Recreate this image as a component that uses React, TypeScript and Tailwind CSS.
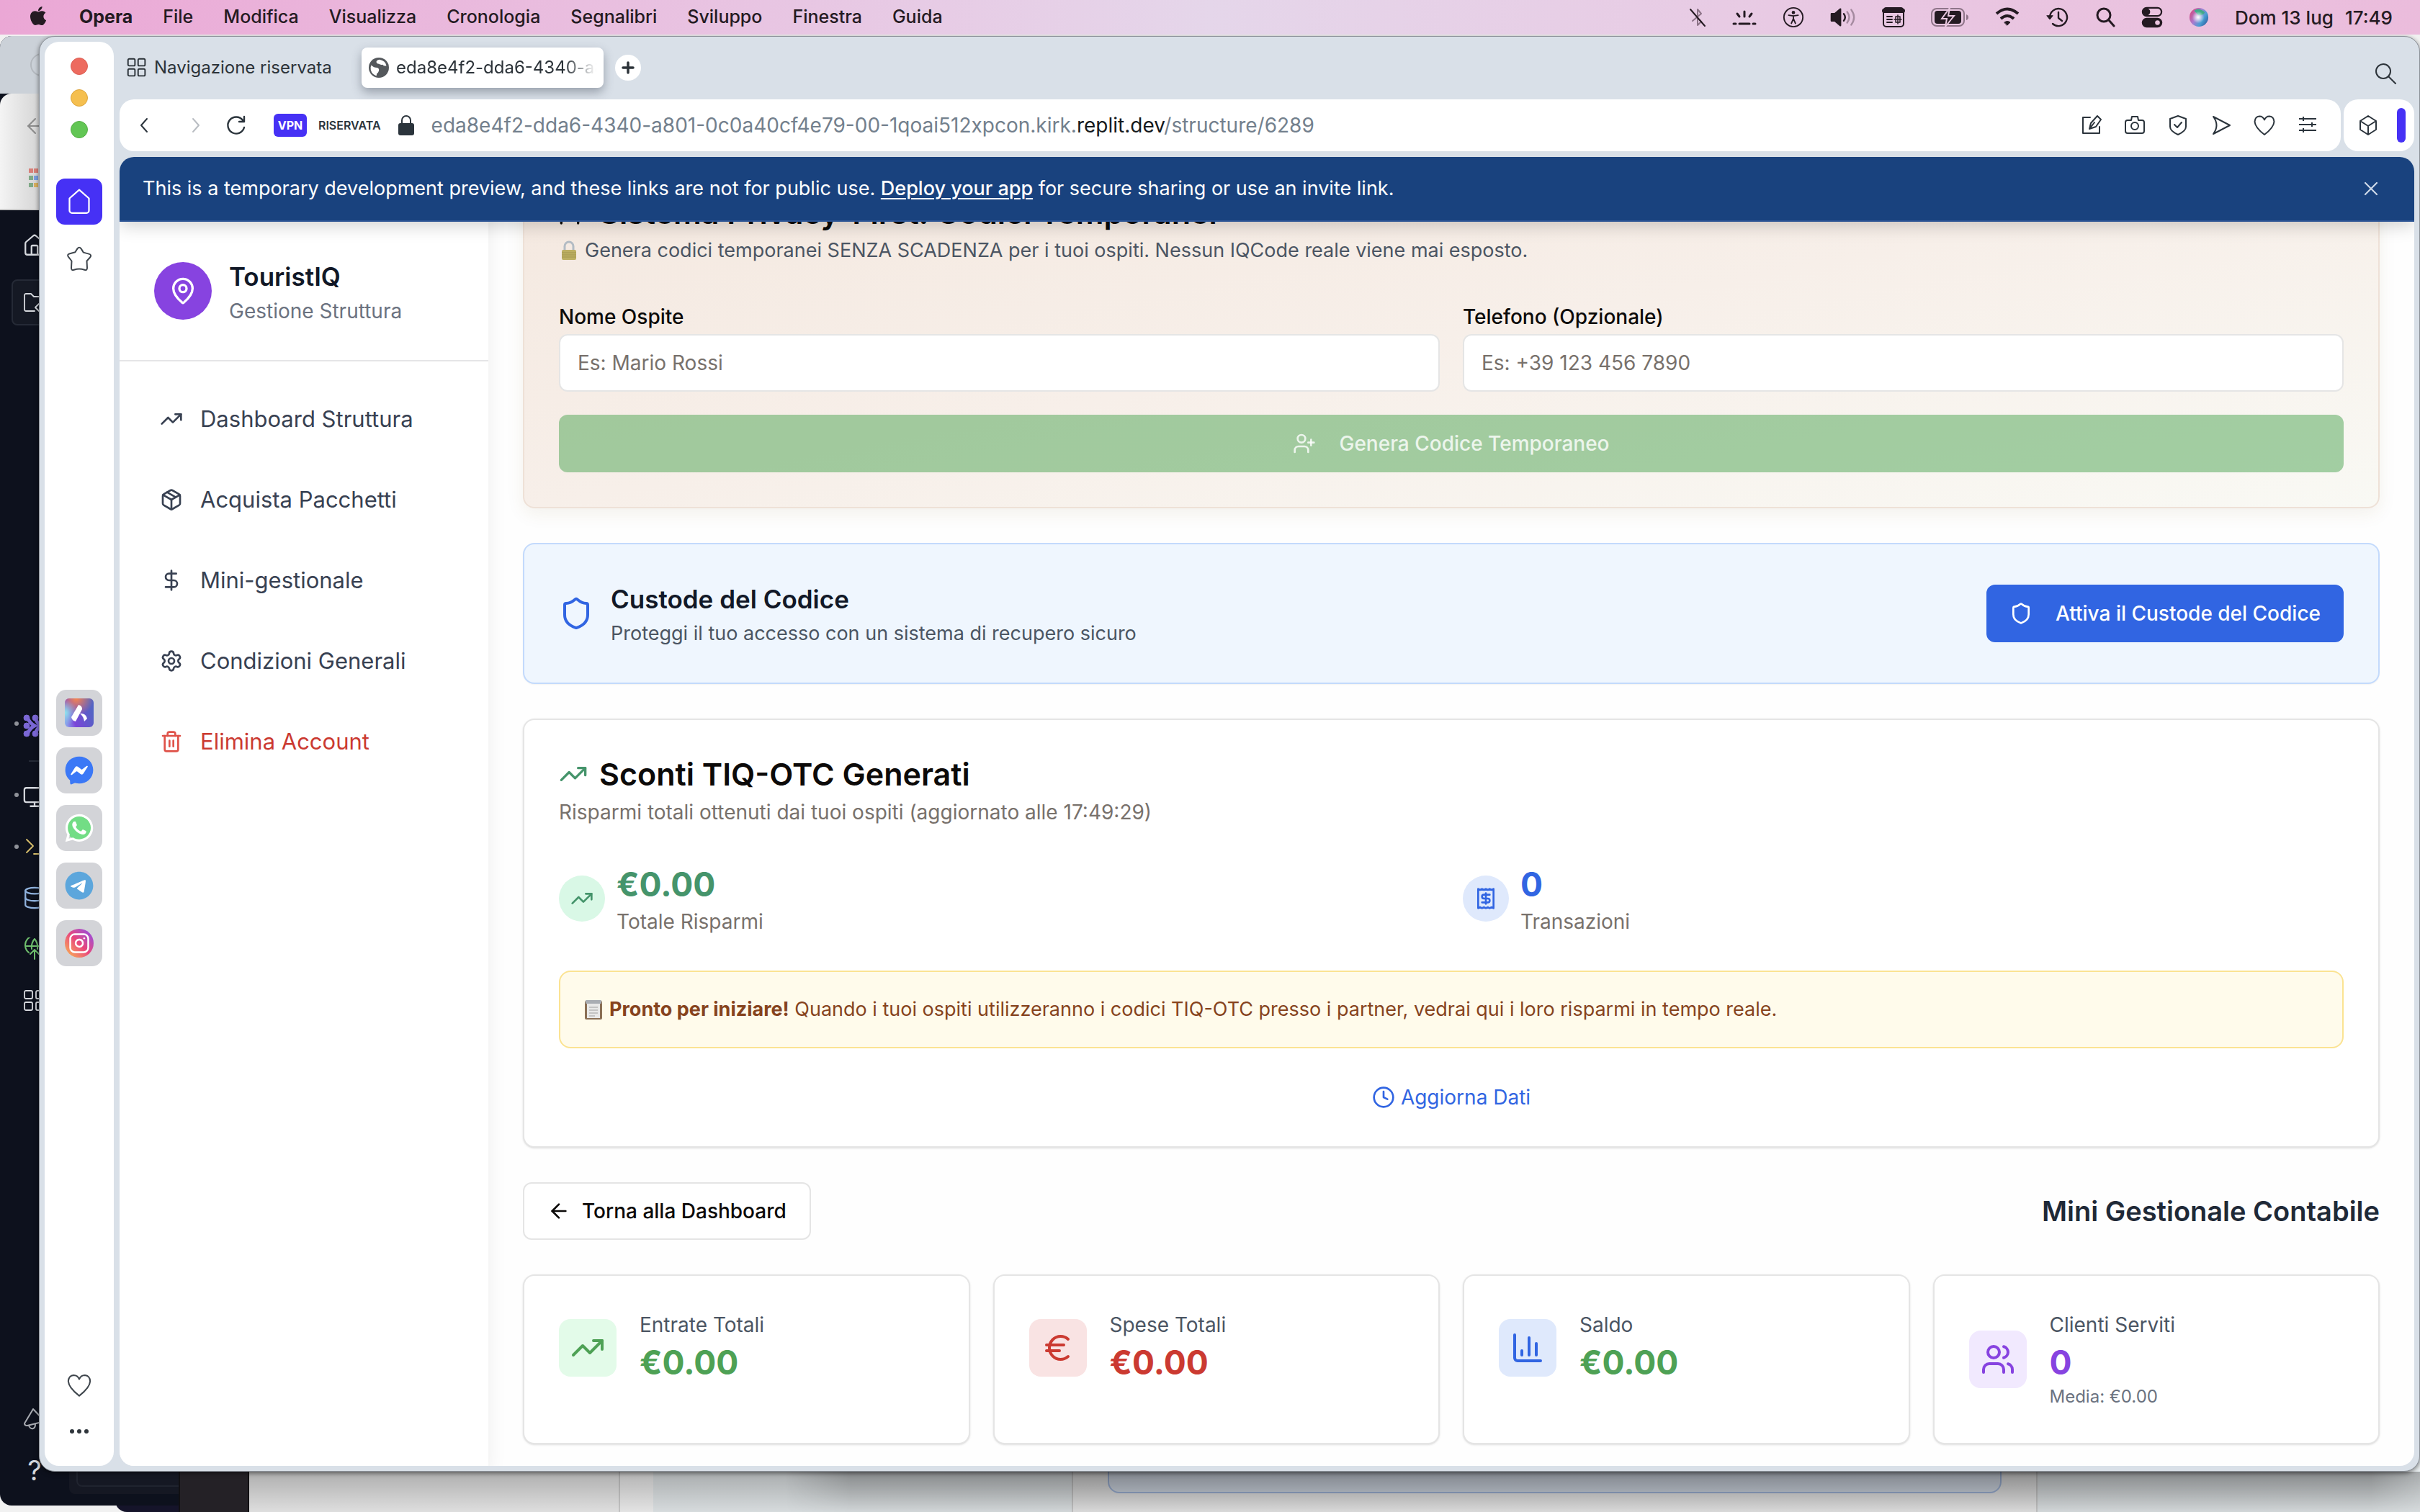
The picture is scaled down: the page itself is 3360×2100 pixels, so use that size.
import type { ReactNode } from "react";
import {
  ArrowLeft,
  ChartColumn,
  Clock,
  Database,
  DollarSign,
  Euro,
  House,
  Instagram,
  MapPin,
  Monitor,
  Package,
  Receipt,
  Settings,
  Shield,
  Trash2,
  TrendingUp,
  UserPlus,
  Users,
  X,
} from "lucide-react";
import { FaApple, FaFacebookMessenger, FaTelegram, FaWhatsapp } from "react-icons/fa6";

type IconProps = { children: ReactNode; box?: string; className?: string; width?: number };

/** Line icon on a free view box; strokes follow the text colour. */
function Line({ children, box = "0 0 32 32", className = "size-8", width = 2 }: IconProps) {
  return (
    <svg
      viewBox={box}
      className={className}
      fill="none"
      stroke="currentColor"
      strokeWidth={width}
      strokeLinecap="round"
      strokeLinejoin="round"
      aria-hidden="true"
    >
      {children}
    </svg>
  );
}

const menus = ["File", "Modifica", "Visualizza", "Cronologia", "Segnalibri", "Sviluppo", "Finestra", "Guida"];

function MenuBar() {
  return (
    <header className="absolute inset-x-0 top-0 z-20 flex h-12 items-center justify-between bg-linear-to-r from-[#eba7d5] via-[#e5d6ea] to-[#ebbcdc] px-[38px] text-[25px] text-[#241a22]">
      <nav className="flex items-center gap-[42px]" aria-label="Opera">
        <FaApple className="size-[30px] -translate-y-0.5" />
        <span className="font-bold">Opera</span>
        {menus.map((m) => (
          <button key={m} type="button" className="font-medium">
            {m}
          </button>
        ))}
      </nav>
      <div className="flex items-center gap-9">
        <Line box="0 0 24 32" className="h-8 w-6">
          <path d="M5 21 17 11 12 5v22l5-5-3-3" stroke="#8d7488" />
          <path d="M2 5l20 23" />
        </Line>
        <Line box="0 0 34 32" className="h-8 w-[34px]" width={3}>
          <path d="M17 8v7M7 11l3 4M27 11l-3 4M2 25h3M10 25h14M29 25h3" />
        </Line>
        <Line box="0 0 32 32" className="size-[30px]">
          <circle cx="16" cy="16" r="14" />
          <circle cx="16" cy="9" r="1.5" fill="currentColor" />
          <path d="M9 13l7 1 7-1M16 14v5M16 18l-3 7M16 18l3 7" />
        </Line>
        <Line box="0 0 38 32" className="h-8 w-9" width={2.5}>
          <path d="M2 11h5l8-7v24l-8-7H2z" fill="currentColor" />
          <path d="M20 11q4 5 0 10" />
          <path d="M25 8q6 8 0 16M31 5q8 11 0 22" stroke="#a58aa0" />
        </Line>
        <Line box="0 0 32 32" className="size-8">
          <rect x="2" y="3" width="28" height="26" rx="4" />
          <path d="M3 7h26" strokeWidth="6" />
          <path d="M7 15h7M7 19h7M7 23h7" />
          <path d="M19 15h6v8h-6zM22 13v12M17 19h10" strokeWidth="1.5" />
        </Line>
        <svg viewBox="0 0 52 28" className="h-7 w-[52px]" aria-hidden="true">
          <rect x="1" y="2" width="45" height="24" rx="7" fill="none" stroke="#8f7589" strokeWidth="2" />
          <rect x="5" y="5" width="37" height="18" rx="4" fill="#241a22" />
          <path d="M49 10v8q3-1 3-4t-3-4z" fill="#8f7589" />
          <path d="M26 1 15 16h7l-2 11 12-15h-8z" fill="#241a22" stroke="#e9c8e0" strokeWidth="2" />
        </svg>
        <Line box="0 0 36 28" className="h-7 w-9" width={4}>
          <path d="M3 9q15-13 30 0M9 16q9-8 18 0" strokeLinecap="butt" />
          <path d="M14 21q4-3 8 0l-4 4z" fill="currentColor" strokeWidth="1" />
        </Line>
        <Line box="0 0 32 32" className="size-8" width={2.4}>
          <path d="M5 16a12 12 0 1 1 4 9M17 9v8l5 4" />
          <path d="M1 14l4 5 4-5z" fill="currentColor" strokeWidth="1" />
        </Line>
        <Line box="0 0 28 32" className="h-8 w-7" width={3}>
          <circle cx="12" cy="13" r="9" />
          <path d="M19 20l7 8" />
        </Line>
        <Line box="0 0 32 32" className="size-[30px]" width={2.4}>
          <rect x="2" y="2" width="28" height="12" rx="6" />
          <circle cx="8" cy="8" r="4" fill="currentColor" />
          <rect x="2" y="18" width="28" height="12" rx="6" fill="currentColor" />
          <circle cx="24" cy="24" r="3.5" fill="#ebc4df" stroke="none" />
        </Line>
        <svg viewBox="0 0 30 30" className="size-[28px]" aria-hidden="true">
          <defs>
            <linearGradient id="siri" x1="0" y1="0.2" x2="1" y2="0.8">
              <stop offset="0" stopColor="#d4487e" />
              <stop offset="0.4" stopColor="#a97bd0" />
              <stop offset="0.7" stopColor="#4a9fd4" />
              <stop offset="1" stopColor="#2f5c9e" />
            </linearGradient>
            <radialGradient id="siriGlow">
              <stop offset="0" stopColor="#ffffff" />
              <stop offset="1" stopColor="#ffffff" stopOpacity="0" />
            </radialGradient>
          </defs>
          <circle cx="15" cy="15" r="14" fill="url(#siri)" />
          <path d="M8 5q8-5 16 3-4 5-10 4z" fill="#3fa98a" />
          <circle cx="14" cy="15" r="9" fill="url(#siriGlow)" />
        </svg>
        <time className="flex gap-4 text-[26px] font-medium">
          <span>Dom 13 lug</span>
          <span>17:49</span>
        </time>
      </div>
    </header>
  );
}

/** Windows that sit behind the browser; only their left and bottom edges show. */
function BackWindows() {
  return (
    <>
      <div className="absolute inset-x-0 top-12 bottom-0 flex items-end bg-[#f1f1f1]" aria-hidden="true">
        <div className="w-[859px]" />
        <div className="h-24 w-12 border-l-2 border-[#d4d4d4] bg-[#f7f7f7]" />
        <div className="h-24 w-[581px] bg-[#e9eef0]" />
        <div className="flex h-24 flex-1 items-start border-x-2 border-[#d2d2d2] bg-[#f1f1f1] px-12">
          <div className="h-[70px] flex-1 rounded-b-2xl border-2 border-[#a9bfe6] bg-[#dfe7f3]" />
        </div>
        <div className="h-24 w-[531px] bg-[#e9eef0]" />
      </div>
      <div className="absolute bottom-0 left-[160px] h-8 w-24 rounded-bl-2xl bg-[#15142a]" aria-hidden="true" />
      <div className="absolute right-0 bottom-0 left-[346px] h-14 bg-linear-to-b from-black/28 to-black/8" aria-hidden="true" />
      <div
        className="absolute right-0 bottom-0 left-[1090px] h-14 mask-r-from-97% mask-r-to-100% mask-l-from-96% mask-l-to-100% bg-linear-to-b from-black/20 to-black/2"
        aria-hidden="true"
      />
      <div
        className="absolute top-[50px] bottom-[9px] left-0 flex w-[260px] flex-col overflow-hidden rounded-2xl bg-[#0d111d]"
        aria-hidden="true"
      >
        <div className="flex h-20 items-center bg-[#cbd1d8] pl-[42px]">
          <div className="size-8 rounded-full border-2 border-[#b4b9bf]" />
        </div>
        <div className="flex h-[162px] flex-col gap-[42px] rounded-tl-2xl border-b-2 border-[#c9c9c9] bg-linear-to-r from-[#f4f4f4] to-[#cfcfcf] to-25% pt-7 pl-8 text-[#8c8c8c]">
          <ArrowLeft size={34} strokeWidth={1.5} />
          <div className="grid w-[26px] grid-cols-3 gap-1 pl-2">
            <i className="size-1.5 bg-[#d77f78]" />
            <i className="size-1.5 bg-[#d77f78]" />
            <i className="size-1.5 bg-[#d77f78]" />
            <i className="size-1.5 bg-[#7fa987]" />
            <i className="size-1.5 bg-[#7a9fe0]" />
            <i className="size-1.5 bg-[#d77f78]" />
            <i className="size-1.5 bg-[#7fa987]" />
            <i className="size-1.5 bg-[#d8b060]" />
            <i className="size-1.5 bg-[#d77f78]" />
          </div>
        </div>
        <div className="relative flex w-24 flex-1 flex-col items-center text-[#d5d8dd]">
          <House size={34} strokeWidth={1.6} className="mt-8" />
          <div className="mt-[30px] ml-4 flex h-16 w-20 shrink-0 items-center rounded-lg border-2 border-[#252a36] bg-[#151924] pl-3.5">
            <Line className="size-8" width={1.8}>
              <path d="M16 28H4a2 2 0 0 1-2-2V6a2 2 0 0 1 2-2h7l4 4h13M22 18l-5 5 5 5" />
            </Line>
          </div>
          <svg viewBox="0 0 32 32" className="mt-[540px] size-8 shrink-0 text-[#7b68d6]" fill="currentColor" stroke="currentColor">
            <circle cx="5" cy="5" r="4" />
            <circle cx="17" cy="5" r="4" />
            <circle cx="5" cy="16" r="4" />
            <circle cx="5" cy="27" r="4" />
            <circle cx="17" cy="27" r="4" />
            <path d="M6 5q4 8 10 11-6 3-10 11M17 5q1 5 7 11-6 6-7 11" fill="none" strokeWidth="5" />
          </svg>
          <div className="mt-8 ml-12 h-0.5 w-16 shrink-0 bg-[#252a36]" />
          <Monitor size={34} strokeWidth={1.6} className="mt-8 shrink-0" />
          <Line className="mt-9 size-8 shrink-0 text-[#d9c06c]" width={1.8}>
            <path d="M5 6l9 9-9 9M15 26h12" />
          </Line>
          <Database size={34} strokeWidth={1.6} className="mt-[38px] shrink-0 text-[#8fb2dd]" />
          <Line className="mt-[38px] size-8 shrink-0 text-[#6fbf6d]" width={2}>
            <path d="M8 21a13 13 0 1 1 16 0M3 12h26M12 16q-1-8 4-14 5 6 4 14M16 30V17M10 23l6-6 6 6" />
          </Line>
          <Line className="mt-10 size-8 shrink-0" width={1.8}>
            <rect x="2" y="2" width="11" height="11" rx="2" />
            <rect x="18" y="2" width="11" height="11" rx="2" />
            <rect x="2" y="18" width="11" height="11" rx="2" />
            <rect x="18" y="18" width="11" height="11" rx="2" />
          </Line>
          <Line className="mt-auto size-8 shrink-0 text-[#a9acb2]" width={2}>
            <path d="M14 3 2 23q0 3 4 3l24-6zM8 26q2 5 6 4 3-1 3-6" />
          </Line>
          <span className="mt-7 mb-5 text-[38px]">?</span>
          <i className="absolute top-[710px] left-5 size-1.5 rounded-full bg-[#8f9299]" />
          <i className="absolute top-[809px] left-5 size-1.5 rounded-full bg-[#8f9299]" />
          <i className="absolute top-[881px] left-5 size-1.5 rounded-full bg-[#8f9299]" />
          <div className="absolute bottom-4 left-24 flex h-20 w-40 items-start rounded-bl-lg bg-[#151823] pl-2.5">
            <div className="flex h-[70px] flex-1 items-end rounded-bl-lg border-2 border-[#20242f] pb-5 pl-24">
              <Line box="0 0 40 24" className="h-6 w-10 text-[#8f9299]">
                <path d="M2 4v14q0 3 3 3h10q3 0 3-3V4M10 10v5M32 4v14M28 8h8" />
              </Line>
            </div>
          </div>
        </div>
      </div>
      <div className="absolute bottom-0 left-[248px] h-20 w-[98px] border-x-2 border-[#111013] bg-[#242126]" aria-hidden="true" />
    </>
  );
}

function OperaRail() {
  const tile = "flex size-16 items-center justify-center rounded-[14px] bg-[#d3d4d8]";
  return (
    <aside className="flex w-24 shrink-0 flex-col items-center rounded-[20px] bg-white pt-[22px] text-[#3f464d]">
      <div className="flex flex-col gap-5">
        <button type="button" aria-label="Chiudi" className="size-6 rounded-full border border-[#dc5f54] bg-[#ed6b5f]" />
        <button type="button" aria-label="Riduci" className="size-6 rounded-full border border-[#dda53c] bg-[#f5bf4f]" />
        <button type="button" aria-label="Ingrandisci" className="size-6 rounded-full border border-[#56af46] bg-[#62c654]" />
      </div>
      <button
        type="button"
        aria-label="Home"
        className="mt-14 flex size-16 items-center justify-center rounded-[12px] bg-[#4631f5] text-white"
      >
        <Line className="size-9" width={2}>
          <path d="M16 1.5 4 12v15a3 3 0 0 0 3 3h18a3 3 0 0 0 3-3V12z" />
        </Line>
      </button>
      <button type="button" aria-label="Preferiti" className="mt-7 flex h-10 items-center">
        <Line className="size-10" width={1.6}>
          <path d="M13.800 4.500q2.200-3 4.400 0l2.500 4 5.900 1.600q3.800 1 1.400 3.900L24.400 18l.4 7.600q0 3.400-3 2.200-5.800-2-11.600 0-3 1.200-3-2.200l.4-7.600-3.400-4.300q-2.400-2.900 1.400-3.900l5.900-1.600z" />
        </Line>
      </button>
      <div className="mt-[578px] flex flex-col gap-4">
        <button type="button" aria-label="Aria" className={tile}>
          <svg viewBox="0 0 40 40" className="size-10" aria-hidden="true">
            <defs>
              <linearGradient id="aria" x1="0" y1="1" x2="1" y2="0.6">
                <stop offset="0" stopColor="#8fb4f0" />
                <stop offset="0.35" stopColor="#7a45d8" />
                <stop offset="1" stopColor="#5463c4" />
              </linearGradient>
              <radialGradient id="ariaTop" cx="0.4" cy="0" r="0.6">
                <stop offset="0" stopColor="#f58450" />
                <stop offset="1" stopColor="#f58450" stopOpacity="0" />
              </radialGradient>
              <radialGradient id="ariaLeft" cx="0" cy="0.5" r="0.45">
                <stop offset="0" stopColor="#90e6ec" />
                <stop offset="1" stopColor="#90e6ec" stopOpacity="0" />
              </radialGradient>
            </defs>
            <rect width="40" height="40" rx="6" fill="url(#aria)" />
            <rect width="40" height="40" rx="6" fill="url(#ariaTop)" />
            <rect width="40" height="40" rx="6" fill="url(#ariaLeft)" />
            <path d="M19 9q5 1 5 6l-9 17q-5-1-6-6z" fill="#fff" />
            <path d="M21 21q8-1 10 7l-4 4q-1-7-6-11z" fill="#fff" />
          </svg>
        </button>
        <button type="button" aria-label="Messenger" className={tile}>
          <span className="flex size-10 items-center justify-center rounded-full bg-[radial-gradient(white_55%,transparent_56%)]">
            <FaFacebookMessenger className="size-10 text-[#3b78f6]" />
          </span>
        </button>
        <button type="button" aria-label="WhatsApp" className={tile}>
          <span className="flex size-10 items-center justify-center bg-[radial-gradient(#72dd85_60%,transparent_61%)]">
            <FaWhatsapp className="size-11 text-white" />
          </span>
        </button>
        <button type="button" aria-label="Telegram" className={tile}>
          <span className="flex size-10 items-center justify-center rounded-full bg-[radial-gradient(white_60%,transparent_61%)]">
            <FaTelegram className="size-10 text-[#5ca6dc]" />
          </span>
        </button>
        <button type="button" aria-label="Instagram" className={tile}>
          <span className="flex size-10 items-center justify-center rounded-full bg-linear-to-tr from-[#f9b83a] via-[#e8447b] to-[#8a3af0]">
            <Instagram size={30} strokeWidth={2} className="text-white" />
          </span>
        </button>
      </div>
      <button type="button" aria-label="Segnalibri" className="mt-auto">
        <Line className="size-9" width={1.8}>
          <path d="M16 29Q3 19 2.500 11 3 4 9 3.500q5 0 7 5 2-5 7-5 6 .5 6.500 7.500Q29 19 16 29z" />
        </Line>
      </button>
      <button type="button" aria-label="Altro" className="mt-[30px] mb-8 flex h-8 items-center gap-1">
        <i className="size-1.5 rounded-full bg-[#2f363c]" />
        <i className="size-1.5 rounded-full bg-[#2f363c]" />
        <i className="size-1.5 rounded-full bg-[#2f363c]" />
      </button>
    </aside>
  );
}

function TabStrip() {
  return (
    <div className="flex h-20 items-start justify-between pt-2 text-2xl text-[#2c3339]">
      <div className="flex items-center">
        <div className="flex h-14 w-[336px] items-center gap-2.5 pl-2.5">
          <Line className="size-7" width={2.2}>
            <rect x="2" y="2" width="11" height="11" rx="2" />
            <rect x="18" y="2" width="11" height="11" rx="2" />
            <rect x="2" y="18" width="11" height="11" rx="2" />
            <rect x="18" y="18" width="11" height="11" rx="2" />
          </Line>
          <span>Navigazione riservata</span>
        </div>
        <div className="flex h-14 w-[336px] items-center gap-2.5 rounded-lg bg-white px-2.5 shadow-[0_6px_14px_rgba(70,80,95,0.45)]">
          <svg viewBox="0 0 32 32" className="size-7 shrink-0" aria-hidden="true">
            <circle cx="16" cy="16" r="16" fill="#54585c" />
            <path d="M4 12q4 4 9 4 4 1 3 5-1 3-3 4l-1 4Q2 25 3 15zM17 3q-5 1-5 4 1 3 4 3 3 2 6 1 2 3 6 2Q27 5 17 3z" fill="#fff" />
          </svg>
          <span className="overflow-hidden mask-r-from-84% mask-r-to-100% whitespace-nowrap">eda8e4f2-dda6-4340-a8</span>
        </div>
        <button type="button" aria-label="Nuova scheda" className="ml-4 flex size-9 items-center justify-center rounded-full bg-white">
          <Line className="size-7" width={4}>
            <path d="M16 8v16M8 16h16" />
          </Line>
        </button>
      </div>
      <button type="button" aria-label="Cerca" className="mt-5 mr-6">
        <Line className="size-8">
          <circle cx="13" cy="13" r="10" />
          <path d="M20 20l10 10" />
        </Line>
      </button>
    </div>
  );
}

function AddressBar() {
  return (
    <div className="flex h-[72px] gap-1 text-[#2b343c]">
      <div className="flex min-w-0 flex-1 items-center rounded-[20px] bg-white pr-[30px] pl-[18px]">
        <button type="button" aria-label="Indietro">
          <Line><path d="M20 7l-8 9 8 9" /></Line>
        </button>
        <button type="button" aria-label="Avanti" className="ml-10 text-[#b9bdc2]">
          <Line><path d="M12 7l8 9-8 9" /></Line>
        </button>
        <button type="button" aria-label="Ricarica" className="ml-6">
          <Line width={2.4}>
            <path d="M27 19a11.500 11.500 0 1 1-2-10M27 4v7h-7" />
          </Line>
        </button>
        <button type="button" className="ml-9 h-8 w-[46px] rounded-md bg-[#4631f5] text-base font-bold text-white">VPN</button>
        <span className="ml-4 text-base font-semibold">RISERVATA</span>
        <svg viewBox="0 0 22 28" className="ml-6 h-7 w-[22px]" aria-hidden="true">
          <rect y="11" width="22" height="17" rx="3" fill="#2b343c" />
          <path d="M5 12V7a6 6 0 0 1 12 0v5" fill="none" stroke="#2b343c" strokeWidth="2" />
        </svg>
        <span className="ml-6 flex-1 text-[28px] text-[#73808d]">
          eda8e4f2-dda6-4340-a801-0c0a40cf4e79-00-1qoai512xpcon.kirk.<span className="text-[#15191d]">replit.dev</span>/structure/6289
        </span>
        <div className="flex items-center gap-7">
          <button type="button" aria-label="Modifica pagina">
            <Line>
              <path d="M14 5H4v22h23v-9M13 21l2-8L24 3l5 5-7 10-9 3zM13 21l7-9" />
            </Line>
          </button>
          <button type="button" aria-label="Istantanea">
            <Line>
              <path d="M3 12q0-3 3-3h5l1-5h8l1 5h5q3 0 3 3v12q0 3-3 3H6q-3 0-3-3z" />
              <circle cx="16" cy="17" r="5" />
            </Line>
          </button>
          <button type="button" aria-label="Protezione">
            <Line>
              <path d="M16 3l11 4v11q0 6-11 11Q5 24 5 18V7zM11 15l4 4 6-7" />
            </Line>
          </button>
          <button type="button" aria-label="Invia">
            <Line><path d="M5 4l23 12L5 28q9-12 0-24z" /></Line>
          </button>
          <button type="button" aria-label="Aggiungi ai preferiti">
            <Line>
              <path d="M16 29Q3 19 2.500 11 3 4 9 3.500q5 0 7 5 2-5 7-5 6 .5 6.500 7.500Q29 19 16 29z" />
            </Line>
          </button>
          <button type="button" aria-label="Impostazioni rapide">
            <Line>
              <path d="M4 7h24M4 15h24M4 23h24M10 4v6M22 12v6M10 20v6" strokeLinecap="butt" />
            </Line>
          </button>
        </div>
      </div>
      <div className="flex w-[98px] items-center justify-end gap-6 rounded-[20px] bg-white pr-3">
        <button type="button" aria-label="Estensioni">
          <Line className="size-8">
            <path d="M16 3l11 7v12l-11 7-11-7V10zM5 10l11 7 11-7M16 17v12" />
          </Line>
        </button>
        <div className="h-12 w-3 rounded-full bg-[#4631f5]" />
      </div>
    </div>
  );
}

function PreviewBanner() {
  return (
    <div className="absolute inset-x-0 top-0 z-10 flex h-[90px] items-center justify-between border-b-2 border-[#2c5494] bg-[#19427e] pr-11 pl-8 text-[27px] text-white shadow-[0_4px_24px_rgba(0,0,0,0.2)]">
      <p>
        This is a temporary development preview, and these links are not for public use.{" "}
        <a href="#deploy" className="font-medium underline decoration-2 underline-offset-4">Deploy your app</a> for secure sharing or use an invite link.
      </p>
      <button type="button" aria-label="Close" className="text-[#cdd8e8]">
        <X size={32} strokeWidth={1.6} />
      </button>
    </div>
  );
}

const navItems = [
  { label: "Dashboard Struttura", icon: TrendingUp },
  { label: "Acquista Pacchetti", icon: Package },
  { label: "Mini-gestionale", icon: DollarSign },
  { label: "Condizioni Generali", icon: Settings },
];

function Sidebar() {
  return (
    <aside className="z-[1] w-[512px] shrink-0 bg-white pt-[90px] shadow-[0_20px_30px_-6px_rgba(0,0,0,0.1)]">
      <div className="flex items-center gap-6 border-b-2 border-[#e5e5e7] p-12">
        <div className="flex size-20 items-center justify-center rounded-full bg-[#8743e0] text-white">
          <MapPin size={40} />
        </div>
        <div>
          <h1 className="text-[35px] leading-[56px] font-semibold text-[#111827]">TouristIQ</h1>
          <p className="text-[28px] leading-10 text-[#6b7280]">Gestione Struttura</p>
        </div>
      </div>
      <nav className="flex flex-col gap-4 p-8 text-[31px]">
        {navItems.map(({ label, icon: Icon }) => (
          <button key={label} type="button" className="flex h-24 items-center gap-6 px-6 text-[#384152]">
            <Icon size={32} />
            {label}
          </button>
        ))}
        <button type="button" className="flex h-24 items-center gap-6 px-6 text-[#cb3a31]">
          <Trash2 size={32} className="text-[#df5249]" />
          Elimina Account
        </button>
      </nav>
    </aside>
  );
}

function Field({ id, label, placeholder }: { id: string; label: string; placeholder: string }) {
  return (
    <div>
      <label htmlFor={id} className="block leading-12 font-medium text-[#0c0a09]">{label}</label>
      <input
        id={id}
        placeholder={placeholder}
        className="block h-20 w-full rounded-xl border-2 border-[#e5e5e5] bg-white px-6 placeholder:text-[#78716c]"
      />
    </div>
  );
}

function PrivacyCard() {
  return (
    <section className="rounded-2xl border-2 border-[#eee1d7] bg-linear-to-br from-[#f4e8df] via-[#f7efe9] to-[#f9f9f4] p-12 shadow-[0_8px_24px_rgba(120,90,20,0.08)]">
      <h2 className="flex items-center gap-4 text-[43px] leading-[54px] font-semibold text-[#0c0a09]">
        <UserPlus size={40} />
        Sistema Privacy-First: Codici Temporanei
      </h2>
      <p className="mt-1.5 flex items-center gap-2 text-[27px] leading-10 text-[#4b5563]">
        <svg viewBox="0 0 28 28" className="size-7" aria-hidden="true">
          <path d="M8 14V8a6 6 0 0 1 12 0v6" fill="none" stroke="#b3bcc4" strokeWidth="3" />
          <rect x="4" y="13" width="20" height="14" rx="2" fill="#bcae62" />
          <path d="M4 17h20M4 20h20M4 23h20" stroke="#a3974f" />
        </svg>
        Genera codici temporanei SENZA SCADENZA per i tuoi ospiti. Nessun IQCode reale viene mai esposto.
      </p>
      <form className="mt-12 grid grid-cols-2 gap-8">
        <Field id="guest" label="Nome Ospite" placeholder="Es: Mario Rossi" />
        <Field id="phone" label="Telefono (Opzionale)" placeholder="Es: +39 123 456 7890" />
        <button
          type="button"
          disabled
          className="col-span-2 flex h-20 items-center justify-center gap-8 rounded-xl bg-[#4ba352]/50 font-medium text-white/80"
        >
          <UserPlus size={32} />
          Genera Codice Temporaneo
        </button>
      </form>
    </section>
  );
}

function CustodeCard() {
  return (
    <section className="flex items-center gap-6 rounded-2xl border-2 border-[#c3dafc] bg-[#eff6fe] p-12 shadow-xs">
      <Shield size={48} className="text-[#3165e2]" />
      <div className="flex-1">
        <h2 className="text-[35px] leading-[56px] font-semibold text-[#111827]">Custode del Codice</h2>
        <p className="text-[27px] leading-10 text-[#4b5563]">Proteggi il tuo accesso con un sistema di recupero sicuro</p>
      </div>
      <button type="button" className="flex h-20 items-center gap-8 rounded-xl bg-[#3165e2] px-8 font-medium text-white">
        <Shield size={32} />
        Attiva il Custode del Codice
      </button>
    </section>
  );
}

function ScontiCard() {
  return (
    <section className="rounded-2xl border-2 border-[#e5e5e5] bg-white p-12 shadow-sm">
      <h2 className="flex items-center gap-4 text-[43px] leading-[54px] font-semibold text-[#0c0a09]">
        <TrendingUp size={40} className="text-[#45946b]" />
        Sconti TIQ-OTC Generati
      </h2>
      <p className="mt-1.5 leading-10 text-[#78716c]">Risparmi totali ottenuti dai tuoi ospiti (aggiornato alle 17:49:29)</p>
      <div className="mt-12 grid grid-cols-2 gap-8">
        <div className="flex items-center gap-4">
          <div className="flex size-16 items-center justify-center rounded-full bg-[#d9f8e6] text-[#45946b]">
            <TrendingUp size={32} />
          </div>
          <div>
            <p className="text-[46px] leading-16 font-bold text-[#45946b]">€0.00</p>
            <p className="leading-10 text-[#78716c]">Totale Risparmi</p>
          </div>
        </div>
        <div className="flex items-center gap-4">
          <div className="flex size-16 items-center justify-center rounded-full bg-[#dfe9fc] text-[#3165e2]">
            <Receipt size={32} />
          </div>
          <div>
            <p className="text-[46px] leading-16 font-bold text-[#3165e2]">0</p>
            <p className="leading-10 text-[#78716c]">Transazioni</p>
          </div>
        </div>
      </div>
      <div className="mt-12 flex items-center gap-2 rounded-2xl border-2 border-[#fbe392] bg-[#fffbeb] p-8 text-[#86431d]">
        <svg viewBox="0 0 28 28" className="size-7" aria-hidden="true">
          <rect x="2" y="2" width="24" height="26" rx="2" fill="#8a6f55" />
          <rect x="5" y="4" width="18" height="22" fill="#e8e8e8" />
          <rect x="3" y="1" width="22" height="5" rx="1" fill="#a9adb3" />
          <path d="M8 11h12M8 15h12M8 19h12M8 23h8" stroke="#c4c4c4" strokeWidth="2" />
        </svg>
        <p className="text-[27px] leading-10">
          <strong className="font-bold">Pronto per iniziare!</strong> Quando i tuoi ospiti utilizzeranno i codici TIQ-OTC presso i partner, vedrai qui i loro risparmi in tempo reale.
        </p>
      </div>
      <button type="button" className="mx-auto mt-12 flex items-center gap-2 leading-10 text-[#3165e2]">
        <Clock size={32} />
        Aggiorna Dati
      </button>
    </section>
  );
}

const stats = [
  { label: "Entrate Totali", value: "€0.00", icon: TrendingUp, box: "bg-[#e3fbe9] text-[#4ea155]", text: "text-[#4ea155]", note: "" },
  { label: "Spese Totali", value: "€0.00", icon: Euro, box: "bg-[#f9e3e3] text-[#cb3a31]", text: "text-[#cb3a31]", note: "" },
  { label: "Saldo", value: "€0.00", icon: ChartColumn, box: "bg-[#dfe9fc] text-[#3165e2]", text: "text-[#4ea155]", note: "" },
  { label: "Clienti Serviti", value: "0", icon: Users, box: "bg-[#f1e9fe] text-[#8743e0]", text: "text-[#8743e0]", note: "Media: €0.00" },
];

function Stats() {
  return (
    <div className="grid grid-cols-4 gap-8">
      {stats.map(({ label, value, icon: Icon, box, text, note }) => (
        <section key={label} className="rounded-2xl border-2 border-[#e5e5e5] bg-white p-12 shadow-sm">
          <div className="flex items-center gap-8">
            <div className={`flex size-20 items-center justify-center rounded-2xl ${box}`}>
              <Icon size={48} />
            </div>
            <div>
              <p className="leading-10 text-[#4b5563]">{label}</p>
              <p className={`text-[46px] leading-16 font-bold ${text}`}>{value}</p>
              {note && <p className="text-2xl leading-8 text-[#6b7280]">{note}</p>}
            </div>
          </div>
        </section>
      ))}
    </div>
  );
}

function Page() {
  return (
    <div className="relative flex min-h-0 flex-1 overflow-hidden rounded-[20px] bg-[#fefefe]">
      <PreviewBanner />
      <Sidebar />
      <main className="flex min-w-0 flex-1 flex-col gap-12 px-12 text-[28px]">
        <PrivacyCard />
        <CustodeCard />
        <ScontiCard />
        <div className="flex items-center justify-between">
          <button
            type="button"
            className="flex h-20 items-center gap-4 rounded-xl border-2 border-[#e5e5e5] bg-white px-8 font-medium text-[#0c0a09]"
          >
            <ArrowLeft size={32} />
            Torna alla Dashboard
          </button>
          <h2 className="text-[38px] font-semibold text-[#1f2937]">Mini Gestionale Contabile</h2>
        </div>
        <Stats />
      </main>
    </div>
  );
}

export default function App() {
  return (
    <div className="relative h-screen overflow-hidden bg-[#5c2a4a] font-['Inter',sans-serif]">
      <BackWindows />
      <MenuBar />
      <div className="absolute top-[50px] right-0 bottom-14 left-[54px] flex gap-2 rounded-[22px] border border-[#8a9097] bg-[#d9e0e8] p-[7px] shadow-[0_2px_6px_rgba(0,0,0,0.5)]">
        <OperaRail />
        <div className="flex min-w-0 flex-1 flex-col">
          <TabStrip />
          <AddressBar />
          <div className="flex min-h-0 flex-1 pt-2">
            <Page />
          </div>
        </div>
      </div>
    </div>
  );
}
